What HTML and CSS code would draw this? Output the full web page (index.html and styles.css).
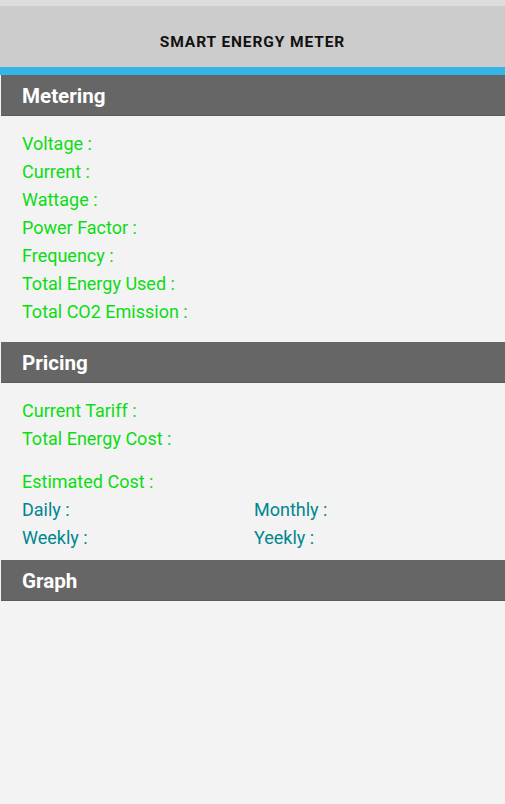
FILE: index.html
```html
<!DOCTYPE html>
<html>
<head>
<meta charset="utf-8">
<link rel="stylesheet" href="styles.css">
</head>
<body>
<div class="status"></div>
<header class="appbar">SMART ENERGY METER</header>
<div class="accent"></div>
<main>
  <h2 class="section-head">Metering</h2>
  <div class="section metering">
    <div class="row green">Voltage :</div>
    <div class="row green">Current :</div>
    <div class="row green">Wattage :</div>
    <div class="row green">Power Factor :</div>
    <div class="row green">Frequency :</div>
    <div class="row green">Total Energy Used :</div>
    <div class="row green">Total CO2 Emission :</div>
  </div>
  <h2 class="section-head">Pricing</h2>
  <div class="section pricing">
    <div class="row green">Current Tariff :</div>
    <div class="row green">Total Energy Cost :</div>
    <div class="row green estimated">Estimated Cost :</div>
    <div class="grid">
      <div class="row teal">Daily :</div>
      <div class="row teal">Monthly :</div>
      <div class="row teal">Weekly :</div>
      <div class="row teal">Yeekly :</div>
    </div>
  </div>
  <h2 class="section-head">Graph</h2>
  <div class="section graph"></div>
</main>
</body>
</html>
```
FILE: styles.css
```css
html, body {
  margin: 0;
  padding: 0;
}
body {
  width: 505px;
  height: 804px;
  background: #f3f3f3;
  font-family: Roboto, "Liberation Sans", sans-serif;
  overflow: hidden;
}
.status {
  height: 6px;
  background: #dddddd;
}
.appbar {
  height: 61px;
  background: #cccccc;
  display: flex;
  align-items: center;
  justify-content: center;
  font-weight: bold;
  font-size: 15.5px;
  letter-spacing: 0.9px;
  color: #111111;
  padding-top: 11px;
  box-sizing: border-box;
}
.accent {
  height: 8px;
  background: #33b5e5;
}
.section-head {
  margin: 0 0 0 1px;
  height: 41px;
  background: #666666;
  color: #ffffff;
  font-size: 20.6px;
  font-weight: bold;
  display: flex;
  align-items: center;
  padding-left: 21px;
  padding-top: 1px;
  border-bottom: 1px solid #5a5a5a;
  box-sizing: border-box;
}
.section {
  padding-left: 22px;
}
.metering {
  padding-top: 14px;
  padding-bottom: 16px;
  border-left: 1px solid #bdbdbd;
  margin-left: -1px;
}
.pricing {
  padding-top: 14px;
  padding-bottom: 8px;
}
.row {
  height: 28px;
  line-height: 28px;
  font-size: 18px;
  white-space: nowrap;
}
.green {
  color: #0cdc14;
}
.teal {
  color: #00868f;
}
.estimated {
  margin-top: 15px;
}
.grid {
  display: grid;
  grid-template-columns: 232px 1fr;
}
.graph {
  height: 203px;
}
```
